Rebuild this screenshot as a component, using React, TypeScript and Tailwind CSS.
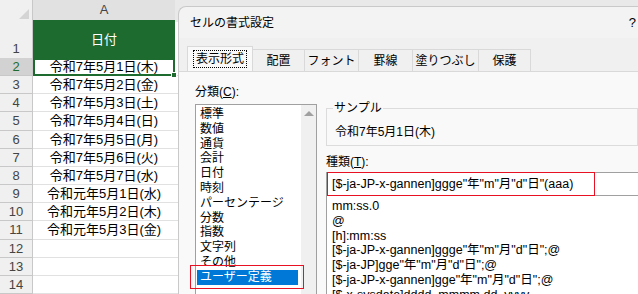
import React from "react";

const sheetFont = { fontFamily: '"Liberation Sans", "Noto Sans CJK JP", sans-serif' };
const dlgFont = { fontFamily: '"Liberation Sans", "Noto Sans CJK JP", sans-serif' };

const dates = [
  "令和7年5月1日(木)",
  "令和7年5月2日(金)",
  "令和7年5月3日(土)",
  "令和7年5月4日(日)",
  "令和7年5月5日(月)",
  "令和7年5月6日(火)",
  "令和7年5月7日(水)",
  "令和元年5月1日(水)",
  "令和元年5月2日(木)",
  "令和元年5月3日(金)",
  "",
  "",
  "",
];

const tabs = ["表示形式", "配置", "フォント", "罫線", "塗りつぶし", "保護"];
const tabWidths = ["w-[66px]", "w-[52px]", "w-[54px]", "w-[54px]", "w-[66px]", "w-[52px]"];

const categories = [
  "標準",
  "数値",
  "通貨",
  "会計",
  "日付",
  "時刻",
  "パーセンテージ",
  "分数",
  "指数",
  "文字列",
  "その他",
];

const formats = [
  "mm:ss.0",
  "@",
  "[h]:mm:ss",
  '[$-ja-JP-x-gannen]ggge"年"m"月"d"日";@',
  '[$-ja-JP]gge"年"m"月"d"日";@',
  '[$-ja-JP-x-gannen]gge"年"m"月"d"日";@',
  "[$-x-sysdate]dddd, mmmm dd, yyyy",
];

function Sheet() {
  return (
    <div className="w-[178px] shrink-0 flex flex-col bg-white" style={sheetFont}>
      <div className="flex h-[22px] bg-[#f0f0f0]">
        <div className="w-[33px] relative border-r border-[#c8c8c8]">
          <div className="absolute right-[3px] bottom-[3px] w-0 h-0 border-l-[10px] border-l-transparent border-b-[10px] border-b-[#d4d4d4]" />
        </div>
        <div className="w-[142px] bg-[#e1e1e1] border-b-2 border-[#1e6b2f] flex items-center justify-center text-[13px] text-[#444]">
          A
        </div>
        <div className="flex-1 bg-[#e9e9e9]" />
      </div>
      <div className="flex h-[38px]">
        <div className="w-[33px] bg-[#f0f0f0] border-r border-[#c8c8c8] flex items-end justify-center pb-[1px] text-[13px] text-[#444] leading-[16px]">
          1
        </div>
        <div className="w-[142px] bg-[#1e6b2f] flex items-center justify-center text-white text-[13px]">
          日付
        </div>
        <div className="flex-1 bg-white" />
      </div>
      {dates.map((d, i) => {
        const sel = i === 0;
        return (
          <div key={i} className="flex h-[19px]">
            <div
              className={`w-[33px] border-r border-b border-[#c8c8c8] flex items-center justify-center text-[13px] leading-none ${
                sel ? "bg-[#d2d2d2] text-[#1e6b2f]" : "bg-[#f0f0f0] text-[#444]"
              }`}
            >
              {i + 2}
            </div>
            <div
              className={`w-[142px] relative flex items-center justify-center text-[13px] text-black leading-none ${
                sel ? "border-2 border-[#1e6b2f]" : "border-b border-[#e1e1e1]"
              }`}
            >
              {d}
              {sel && (
                <div className="absolute right-[-4px] bottom-[-4px] w-[6px] h-[6px] bg-[#1e6b2f] border border-white" />
              )}
            </div>
            <div className="flex-1 border-b border-[#e1e1e1]" />
          </div>
        );
      })}
    </div>
  );
}

function Dialog() {
  return (
    <div
      className="flex-1 mt-[6px] rounded-tl-[8px] border-l border-t border-[#c9c9c9] bg-[#f3f3f3] flex flex-col overflow-hidden text-black"
      style={dlgFont}
    >
      <div className="h-[31px] shrink-0 flex items-center justify-between pl-[11px] pt-[1px] text-[12px]">
        <span>セルの書式設定</span>
        <span className="text-[13px] mr-[2px]">?</span>
      </div>
      <div className="h-[33px] shrink-0 flex items-end pl-[8px] bg-[#f0f0f0]">
        {tabs.map((t, i) => (
          <div
            key={t}
            className={`${tabWidths[i]} whitespace-nowrap flex items-center justify-center text-[12px] border-t border-r border-[#d9d9d9] ${
              i === 0 ? "h-[25px] bg-[#f9f9f9] border-l" : "h-[22px] bg-[#f0f0f0]"
            }`}
          >
            {i === 0 ? (
              <span className="border border-dotted border-black px-[2px] leading-[16px]">{t}</span>
            ) : (
              t
            )}
          </div>
        ))}
      </div>
      <div className="flex-1 bg-[#f9f9f9] border-t border-[#d9d9d9] flex pl-[16px] pt-[12px] gap-[9px]">
        <div className="w-[122px] flex flex-col">
          <div className="text-[12px] leading-[16px] h-[20px]">
            分類(<span className="underline">C</span>):
          </div>
          <div className="flex-1 bg-white border border-[#a0a0a0] border-b-0 flex">
            <div className="flex-1 flex flex-col pl-[4px] pt-[2px] text-[12px] leading-[14.8px]">
              {categories.map((c) => (
                <div key={c} className="h-[14.8px]">{c}</div>
              ))}
              <div className="relative -ml-[3px] mr-[3px]">
                <div className="bg-[#0078d7] text-white h-[15px] pl-[3px] leading-[15px]">ユーザー定義</div>
                <div className="absolute -left-[7px] -right-[6px] -top-[5px] -bottom-[4px] border-[1.5px] border-[#e81123]" />
              </div>
            </div>
            <div className="w-[15px] bg-[#f0f0f0] flex justify-center pt-[6px]">
              <div className="w-0 h-0 border-l-[5px] border-r-[5px] border-b-[5px] border-l-transparent border-r-transparent border-b-[#a0a0a0]" />
            </div>
          </div>
        </div>
        <div className="flex-1 flex flex-col pt-[17px]">
          <fieldset className="border border-[#dcdcdc] h-[45px] pl-[5px]">
            <legend className="text-[12px] leading-[14px] px-[1px] ml-[1px]">サンプル</legend>
            <div className="text-[12px] leading-[18px] pt-[8px] pl-[3px]">令和7年5月1日(木)</div>
          </fieldset>
          <div className="text-[12px] leading-[16px] mt-[8px]">
            種類(<span className="underline">T</span>):
          </div>
          <div className="h-[24px] shrink-0 mt-[2px] bg-white border border-[#a0a0a0] border-r-0 relative flex items-center pl-[5px] text-[12.5px] whitespace-nowrap">
            <span>[$-ja-JP-x-gannen]ggge"年"m"月"d"日"(aaa)</span>
            <div className="absolute left-0 top-[-1px] w-[268px] h-[24px] border-[1.5px] border-[#e81123]" />
          </div>
          <div className="flex-1 bg-white border-l border-[#a0a0a0] pt-[3px] pl-[5px] text-[12.5px] leading-[14.8px]">
            {formats.map((f) => (
              <div key={f} className="h-[14.8px] whitespace-nowrap">{f}</div>
            ))}
          </div>
        </div>
      </div>
    </div>
  );
}

export default function App() {
  return (
    <div className="w-[638px] h-[294px] overflow-hidden flex bg-[#e9e9e9]">
      <Sheet />
      <Dialog />
    </div>
  );
}
